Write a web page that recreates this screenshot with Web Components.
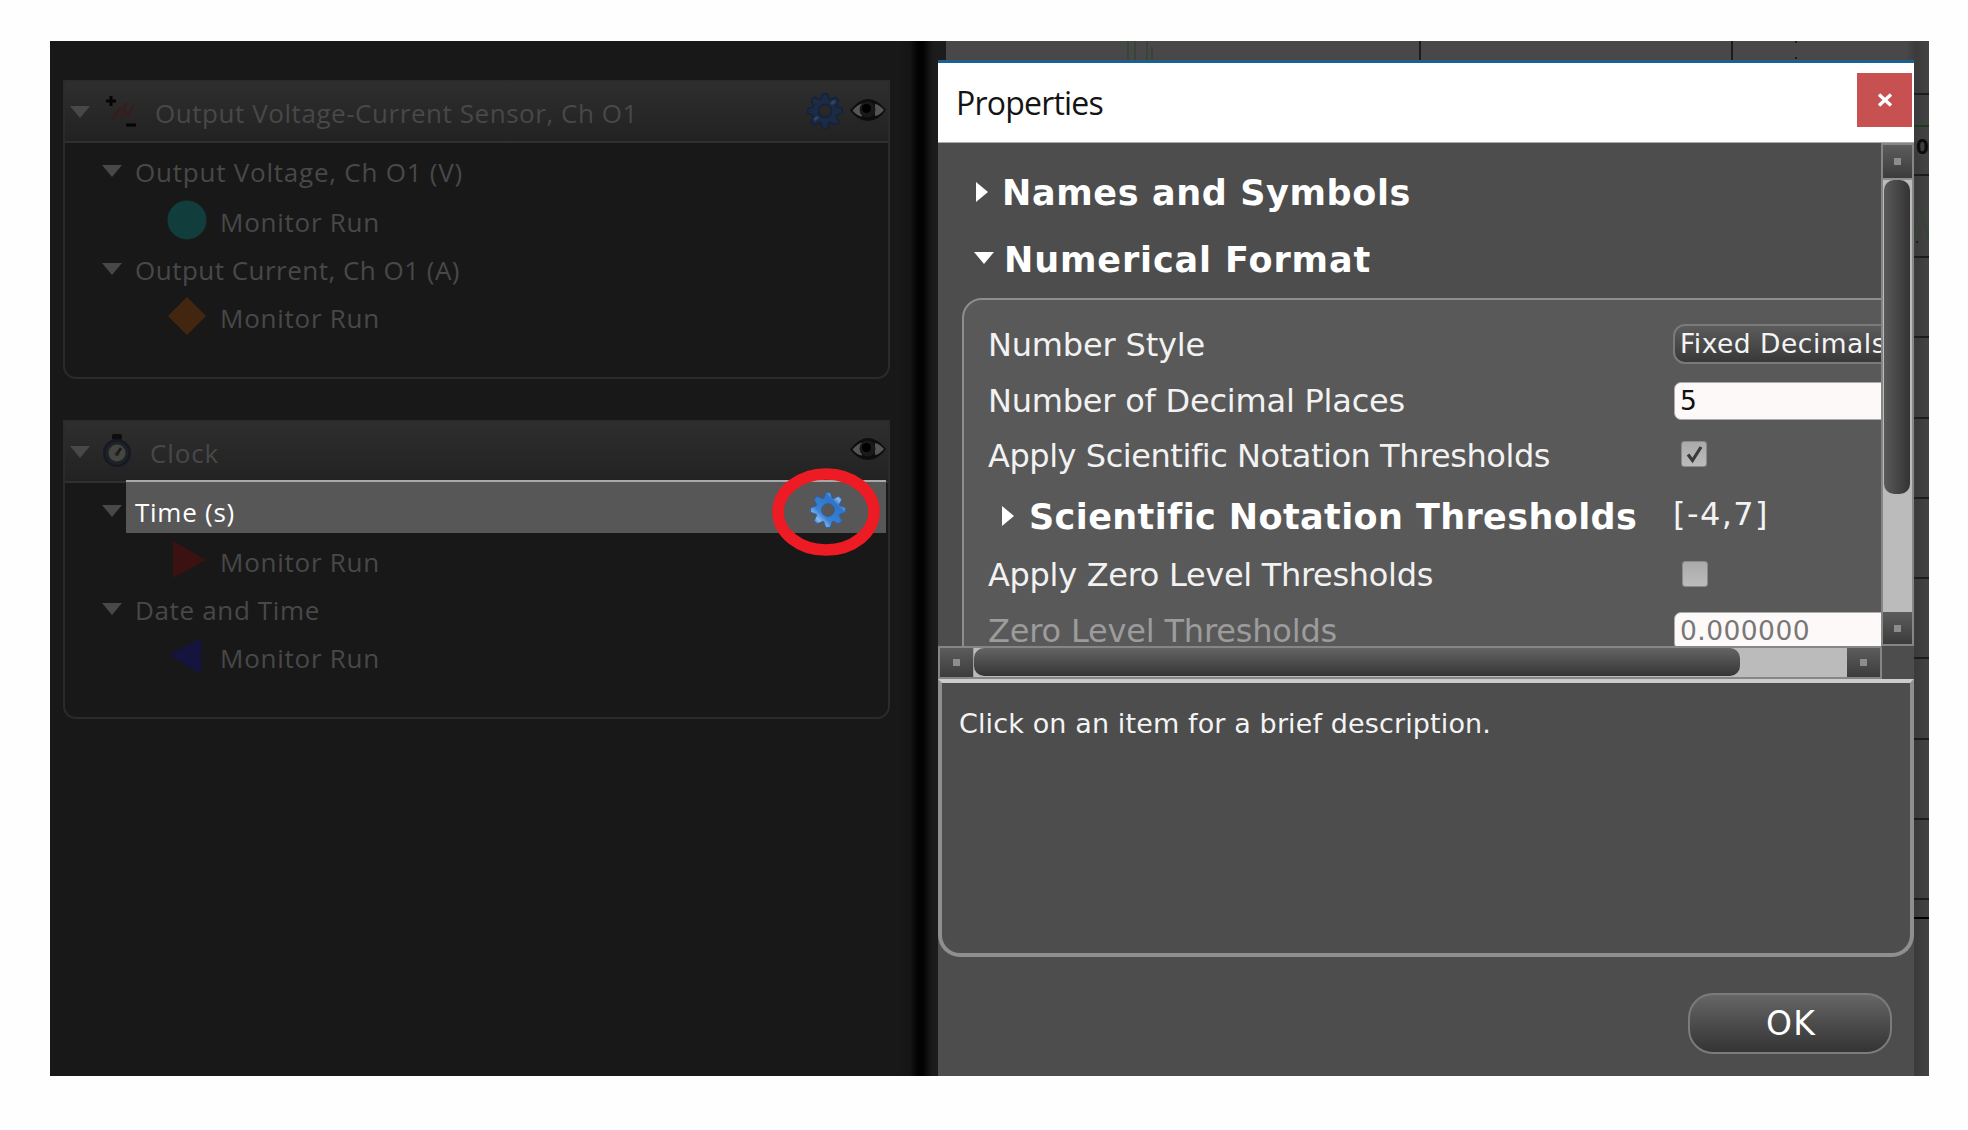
<!DOCTYPE html>
<html lang="en">
<head>
<meta charset="utf-8">
<title>Properties</title>
<style>
html,body{margin:0;background:#fefefe;overflow:hidden}
body{width:1968px;height:1130px}
</style>
</head>
<body>
<capstone-app></capstone-app>
<script>
const define=(name,html,setup)=>customElements.define(name,class extends HTMLElement{
  constructor(){super();this.attachShadow({mode:'open'});}
  connectedCallback(){
    if(this.ready)return;this.ready=true;
    this.shadowRoot.innerHTML=html;
    if(setup)setup(this,this.shadowRoot);
  }
});

/* Text tracked so that its line takes the width given in w */
define('fit-text',`<style>:host{display:block;flex:none;white-space:nowrap}span{display:inline-block}</style><span><slot></slot></span>`,(el,root)=>{
  const s=root.querySelector('span'),w=+el.getAttribute('w'),n=el.textContent.trim().length;
  if(w)s.style.letterSpacing=((w-s.getBoundingClientRect().width)/n).toFixed(3)+'px';
});

const gear=(()=>{let d='';for(let i=0;i<8;i++){const c=i*Math.PI/4;[[-.34,12.5],[-.13,17.5],[.13,17.5],[.34,12.5]].forEach(([a,r],k)=>{d+=(i||k?'L':'M')+(18+r*Math.sin(c+a)).toFixed(2)+' '+(18-r*Math.cos(c+a)).toFixed(2);});}
return d+'ZM18 11.500a6.500 6.500 0 1 0 0 13a6.500 6.500 0 1 0 0-13Z';})();
const icons={
  gear:[36,36,`<defs><linearGradient id="g" x1="0" y1="1" x2="1" y2="0"><stop offset=".1" stop-color="#2e6fc0"/><stop offset=".22" stop-color="#8ab8f0"/><stop offset=".36" stop-color="#3a80d4"/><stop offset=".7" stop-color="#2f74c8"/><stop offset=".8" stop-color="#86b6ee"/><stop offset=".95" stop-color="#2c66b4"/></linearGradient></defs><path fill="url(#g)" fill-rule="evenodd" stroke="#2860a8" stroke-width=".8" stroke-linejoin="round" d="${gear}"/>`],
  dimgear:[36,36,`<path fill="#1b2b46" fill-rule="evenodd" stroke="#15213a" stroke-width="1.4" d="${gear}"/><path d="M7 27l4-3M24 11l4-3" stroke="#33445e" stroke-width="3"/>`],
  eye:[36,22,`<path d="M0 11.500Q9 0 18 0T36 11Q28 22 18 22T0 11.500Z" fill="#0d0d0d"/><path d="M2.500 11.500Q7 6 12 4.500V17.500Q7 17 2.500 11.500ZM34 11Q29 5.500 25 5V17Q29.500 16.500 34 11Z" fill="#555"/><circle cx="17.500" cy="10.500" r="8" fill="#1b1918"/><circle cx="16.500" cy="9.500" r="4.500" fill="#000"/>`],
  sensor:[34,34,`<path d="M6 1v10M1 6h10M21 30h10" stroke="#050505" stroke-width="3"/><path d="M7 25L15 13M16 24L21 8M17 13L24 22M22 21L29 9" fill="none" stroke="#3b1c1c" stroke-width="2.400"/>`],
  clock:[28,36,`<rect x="9" y="1" width="10" height="6" rx="2" fill="#0d0d0d"/><circle cx="14" cy="20" r="14" fill="#161a20"/><circle cx="14" cy="20" r="11.500" fill="#1d2128"/><circle cx="14" cy="20" r="8.500" fill="#464540"/><path d="M14 21L18 15" stroke="#191919" stroke-width="2.500"/><circle cx="14" cy="21" r="2" fill="#222"/>`],
  circle:[40,40,`<circle cx="20" cy="20" r="19.500" fill="#123d3d"/>`],
  diamond:[40,40,`<path d="M20 1L39 20 20 39 1 20Z" fill="#422610"/>`],
  right:[40,40,`<path d="M6 1L39 20 6 38Z" fill="#3c1112"/>`],
  left:[40,40,`<path d="M2 19L34 2V38Z" fill="#14143e"/>`],
  down:[20,12,`<path d="M0 0H20L10 12Z" fill="currentColor"/>`],
  play:[12,20,`<path d="M0 0L12 10 0 20Z" fill="currentColor"/>`],
  close:[16,14,`<path d="M2 1.500L14 12.500M14 1.500L2 12.500" stroke="#fff" stroke-width="3.400"/>`],
  check:[25,25,`<path d="M7 13.500L11.500 19.500 20 6" fill="none" stroke="#3a3a3a" stroke-width="3.200"/>`]
};
define('ui-icon',`<style>:host{display:block;flex:none}svg{display:block}</style>`,(el,root)=>{
  const [w,h,b]=icons[el.getAttribute('name')];
  root.innerHTML+=`<svg width="${w}" height="${h}" viewBox="0 0 ${w} ${h}">${b}</svg>`;
});

define('sensor-group',`<style>
:host{display:block;box-sizing:border-box;width:827px;height:299px;border:2px solid #2b2b2b;border-radius:0 0 13px 13px;color:#484848;font:26px/40px "Open Sans","Noto Sans",sans-serif}
header{display:flex;align-items:center;height:59px;padding:0 2px 0 5px;border-bottom:2px solid #303030;background:linear-gradient(#2e2e2e,#222)}
header slot[name=icon]{display:block;width:34px;margin-left:15px}
.t{display:flex;flex:1;padding-top:2px}
.a{display:flex;align-items:center;gap:7px;margin-top:-4px}
.rows{padding-top:4px}
</style><header><ui-icon name="down"></ui-icon><slot name="icon"></slot><div class="t"><slot name="title"></slot></div><div class="a"><slot name="actions"></slot></div></header><div class="rows"><slot></slot></div>`);

define('tree-row',`<style>
:host{display:flex;align-items:center;box-sizing:border-box;height:50px;padding-left:37px;position:relative}
:host([short]){height:46px}
ui-icon{margin:-2px 13px 0 0}
:host([selected]) .t{color:#fff}
:host([selected])::before{content:"";position:absolute;left:61px;right:2px;top:-7px;height:51px;border-top:2px solid #a9a9a9;background:#575757}
.t{position:relative;flex:1;margin-top:-1px}
</style><ui-icon name="down"></ui-icon><div class="t"><slot></slot></div><slot name="actions"></slot>`);

define('run-row',`<style>
:host{display:flex;align-items:center;height:50px;padding-left:102px}
:host([short]){height:47px}
ui-icon{margin:-5px 13px 0 0}
</style><fit-text w="160">Monitor Run</fit-text>`,(el,root)=>{
  const icon=document.createElement('ui-icon');
  icon.setAttribute('name',el.getAttribute('marker'));
  root.querySelector('fit-text').before(icon);
});

define('data-panel',`<style>
:host{display:flex;flex-direction:column;gap:41px;box-sizing:border-box;width:896px;height:1035px;padding:39px 0 0 13px;background:linear-gradient(90deg,#181818 0 850px,#151515 860px,#020202 868px,#020202 873px,#161616 880px,#1c1c1c 884px);position:relative}
.mark{position:absolute;left:722px;top:427px}
.g{margin:-4px 42px 0 0;position:relative}
</style>
<sensor-group><ui-icon slot="icon" name="sensor"></ui-icon><fit-text slot="title" w="483" style="margin-left:16px">Output Voltage-Current Sensor, Ch O1</fit-text><ui-icon slot="actions" name="dimgear" style="margin-top:2px"></ui-icon><ui-icon slot="actions" name="eye"></ui-icon>
<tree-row><fit-text w="328">Output Voltage, Ch O1 (V)</fit-text></tree-row><run-row marker="circle"></run-row><tree-row short><fit-text w="325">Output Current, Ch O1 (A)</fit-text></tree-row><run-row marker="diamond"></run-row></sensor-group>
<sensor-group><ui-icon slot="icon" name="clock" style="margin:-1px 0 0 -2px"></ui-icon><fit-text slot="title" w="69" style="margin-left:11px">Clock</fit-text><ui-icon slot="actions" name="eye" style="margin-top:-1px"></ui-icon>
<tree-row selected><fit-text w="100">Time (s)</fit-text><ui-icon class="g" slot="actions" name="gear"></ui-icon></tree-row><run-row marker="right"></run-row><tree-row short><fit-text w="185">Date and Time</fit-text></tree-row><run-row marker="left"></run-row></sensor-group>
<svg class="mark" width="108" height="88"><ellipse cx="54" cy="44" rx="48" ry="38" fill="none" stroke="#ed1c24" stroke-width="11.500"/></svg>`);

define('graph-area',`<style>
:host{display:block;flex:1;height:1035px;background:linear-gradient(90deg,#484848 0 960px,#3b3b3b 970px,#444 983px)}
svg{display:block}text{font:bold 22px "Open Sans",sans-serif}
</style><svg width="983" height="1035"><g stroke="#1c1c1c" stroke-width="2"><path d="M474 0V21M786 0V21"/><path stroke-dasharray="2 14" d="M850 0V21"/><path d="M966 53H983M966 134H983M966 216H983M966 296H983M966 377H983M966 457H983M966 537H983M966 617H983M966 698H983M966 778H983M966 858H983M966 201H972"/><path stroke="#000" d="M966 877H983"/></g><g stroke="#374437" stroke-width="2" fill="none"><path stroke="#203820" d="M966 85H983"/><path d="M182 0V21M189 0V21M201 0V21M206 6V21M968 206L975 168 983 200"/></g><text x="970" y="113" fill="#0b0b0b">0</text></svg>`);

define('scroll-bar',`<style>
:host{display:flex;box-sizing:border-box;background:#bbb;border:2px solid #868686}
:host([vertical]){flex-direction:column}
i{flex:none;display:grid;place-items:center;background:linear-gradient(#5c5c5c,#3c3c3c)}
i::after{content:"";width:7px;height:7px;background:#8d8d8d}
b{flex:none;background:linear-gradient(#646464,#353535);border-radius:10px}
s{flex:1}
:host([vertical]) i{height:33px;border-bottom:2px solid #909090}
:host([vertical]) i:last-child{height:32px;border-bottom:0}
:host([vertical]) b{height:314px;margin:0 2px 0 1px;background:linear-gradient(90deg,#5a5a5a,#343434)}
:host(:not([vertical])) i{width:33px;border-right:1px solid #a0a0a0}
:host(:not([vertical])) i:last-child{border:0}
:host(:not([vertical])) b{width:766px;margin-bottom:1px}
</style><i></i><b></b><s></s><i></i>`);

define('prop-section',`<style>
:host{display:flex;align-items:center;color:#fff;font:bold 35px/40px "DejaVu Sans",Verdana,sans-serif}
div{width:30px}
</style><div><slot name="arrow"></slot></div><slot></slot>`);

define('prop-row',`<style>
:host{display:flex;align-items:center;flex:none;font:32px/40px "DejaVu Sans",Verdana,sans-serif;color:#f2f2f2}
.l{width:684px;flex:none;padding-left:24px;color:inherit}
:host([disabled]) .l{color:#9c9c9c}
</style><div class="l"><slot></slot></div><slot name="value"></slot>`);

define('field-box',`<style>
:host{display:flex;align-items:center;flex:none;box-sizing:border-box;width:260px;height:38px;margin-left:2px;padding-left:5px;background:#fef9f9;border:1px solid #aaa;border-radius:7px;color:#111;font-size:26.500px}
:host([muted]){color:#777}
:host([combo]){height:40px;margin:-2px 0 0 1px;padding-left:5px;border:2px solid #7a7a7a;border-radius:12px;background:linear-gradient(#5c5c5c,#383838);color:#f4f4f4}
</style><slot></slot>`);

define('check-box',`<style>:host{display:block;box-sizing:border-box;width:26px;height:26px;margin:-3px 0 0 9px;background:linear-gradient(#aaa,#bcbcbc);border:1px solid #8a8a8a;border-radius:3px}ui-icon{margin:-1px}:host(:not([checked])) ui-icon{display:none}</style><ui-icon name="check"></ui-icon>`);

define('push-button',`<style>:host{display:flex;align-items:center;justify-content:center;box-sizing:border-box;width:204px;height:61px;border:2px solid #7b7b7b;border-radius:25px;background:linear-gradient(#666,#4c4c4c 50%,#343434);color:#fff;font:33px/40px "DejaVu Sans",sans-serif}</style><slot></slot>`);

define('properties-dialog',`<style>
:host{display:flex;flex-direction:column;position:absolute;left:888px;top:19px;width:976px;height:1016px;background:#4d4d4d}
.title{flex:none;box-sizing:border-box;display:flex;justify-content:space-between;align-items:center;height:83px;border-top:3px solid #1c608f;border-bottom:1px solid #aaa;background:#fff;padding:0 2px 0 18px;color:#141414;font:32px/40px "Open Sans",sans-serif}
.x{display:grid;place-items:center;width:55px;height:54px;margin-bottom:6px;background:#c75050}
.view{flex:none;display:flex;height:503px}
.content{flex:1;min-width:0;overflow:hidden;display:flex;flex-direction:column;position:relative}
.sec{flex:none;padding-left:38px}
.box{flex:none;width:1100px;height:420px;margin:18px 0 0 24px;box-sizing:border-box;border:2px solid #8d8d8d;border-radius:20px;background:#595959;padding-top:17px;display:flex;flex-direction:column}
.v{width:33px;flex:none}
.hrow{flex:none;display:flex;height:33px}.h{width:944px;flex:none}
.desc{flex:none;box-sizing:border-box;height:278px;border:4px solid #8f8f8f;border-top-color:#ccc;border-radius:0 0 22px 22px;padding:21px 0 0 17px;color:#f4f4f4;font:27px/40px "DejaVu Sans",sans-serif}
.foot{display:flex;justify-content:flex-end;padding:36px 22px 0 0}
</style>
<div class="title"><fit-text w="147">Properties</fit-text><div class="x"><ui-icon name="close"></ui-icon></div></div>
<div class="view"><div class="content">
<prop-section class="sec" style="margin-top:30px"><ui-icon slot="arrow" name="play" style="margin-top:-3px"></ui-icon><fit-text w="409" style="margin-left:-4px">Names and Symbols</fit-text></prop-section>
<prop-section class="sec" style="margin-top:27px"><ui-icon slot="arrow" name="down" style="margin:-5px 0 0 -2px"></ui-icon><fit-text w="367" style="margin-left:-2px">Numerical Format</fit-text></prop-section>
<div class="box">
<prop-row style="height:56px"><fit-text w="217">Number Style</fit-text><field-box slot="value" combo><fit-text w="206">Fixed Decimals</fit-text></field-box></prop-row>
<prop-row style="height:55px"><fit-text w="417">Number of Decimal Places</fit-text><field-box slot="value">5</field-box></prop-row>
<prop-row style="height:55px"><fit-text w="562">Apply Scientific Notation Thresholds</fit-text><check-box slot="value" checked></check-box></prop-row>
<prop-row style="height:67px"><prop-section style="margin-left:14px"><ui-icon slot="arrow" name="play" style="margin-top:-2px"></ui-icon><fit-text w="607" style="margin-left:-3px">Scientific Notation Thresholds</fit-text></prop-section><fit-text slot="value" w="96" style="margin:-6px 0 0 1px">[-4,7]</fit-text></prop-row>
<prop-row style="height:50px"><fit-text w="445">Apply Zero Level Thresholds</fit-text><check-box slot="value" style="margin-left:10px"></check-box></prop-row>
<prop-row style="height:61px" disabled><fit-text w="349">Zero Level Thresholds</fit-text><field-box slot="value" muted><fit-text w="130">0.000000</fit-text></field-box></prop-row>
</div></div><scroll-bar class="v" vertical></scroll-bar></div>
<div class="hrow"><scroll-bar class="h"></scroll-bar></div>
<div class="desc"><fit-text w="532">Click on an item for a brief description.</fit-text></div>
<div class="foot"><push-button><fit-text w="50" style="margin-left:2px">OK</fit-text></push-button></div>`);

define('capstone-app',`<style>:host{display:flex;position:relative;width:1879px;height:1035px;margin:41px 0 0 50px;overflow:hidden}</style><data-panel></data-panel><graph-area></graph-area><properties-dialog></properties-dialog>`);
</script>
</body>
</html>
